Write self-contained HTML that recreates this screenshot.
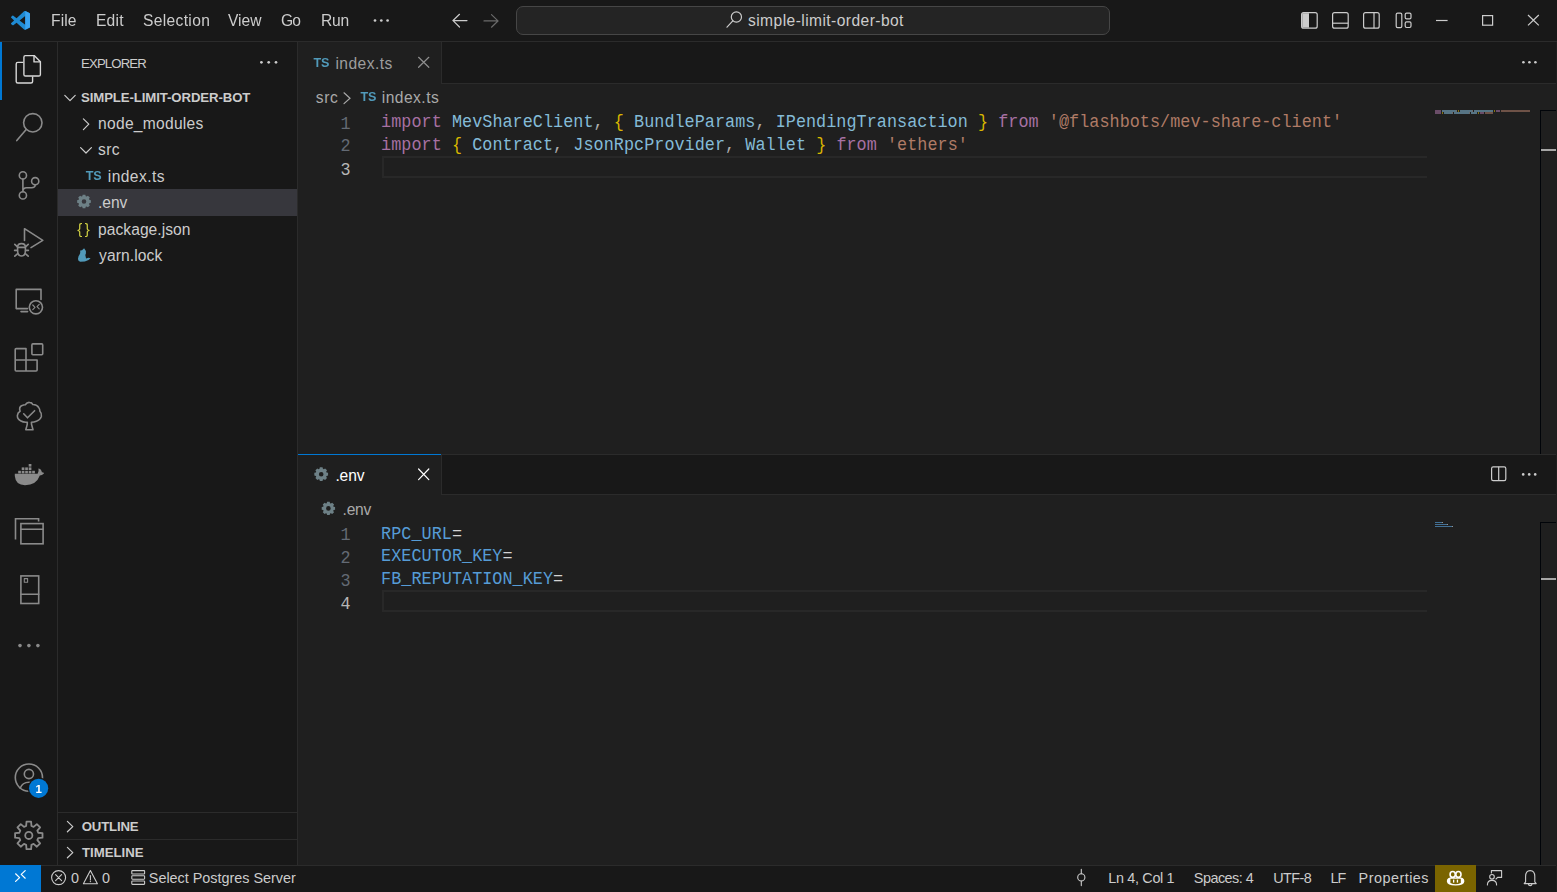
<!DOCTYPE html>
<html><head><meta charset="utf-8">
<style>
*{box-sizing:border-box;margin:0;padding:0}
html,body{width:1557px;height:892px;overflow:hidden;background:#181818}
body{position:relative;font-family:"Liberation Sans",sans-serif;color:#cccccc}
.a{position:absolute}
.t{position:absolute;white-space:pre;line-height:1;font-family:"Liberation Sans",sans-serif}
.m{position:absolute;white-space:pre;line-height:1;font-family:"Liberation Mono",monospace;font-size:16.8px;letter-spacing:0.045px;transform:scaleY(1.13);transform-origin:0 12px}
svg.ov{position:absolute;left:0;top:0;width:1557px;height:892px;overflow:visible}
.kw{color:#c586c0}.id{color:#9cdcfe}.br{color:#ffd700}.st{color:#ce9178}.pu{color:#cccccc}
.ln{color:#6e7681;text-align:right;width:40px}
</style></head><body>
<!-- title bar -->
<div class="a" style="left:0;top:41px;width:1557px;height:1px;background:#2b2b2b"></div>
<div class="a" style="left:516px;top:6px;width:594px;height:29px;border:1px solid #464646;border-radius:7px;background:#242424"></div>

<!-- activity bar -->
<div class="a" style="left:57px;top:42px;width:1px;height:823px;background:#2b2b2b"></div>
<div class="a" style="left:0;top:42px;width:2px;height:58px;background:#0078d4"></div>

<!-- sidebar -->
<div class="a" style="left:297px;top:42px;width:1px;height:823px;background:#2b2b2b"></div>
<div class="a" style="left:58px;top:189px;width:239px;height:27px;background:#37373d"></div>
<div class="a" style="left:58px;top:812px;width:239px;height:1px;background:#2b2b2b"></div>
<div class="a" style="left:58px;top:839px;width:239px;height:1px;background:#2b2b2b"></div>

<!-- editor upper -->
<div class="a" style="left:298px;top:83px;width:1259px;height:1px;background:#2b2b2b"></div>
<div class="a" style="left:298px;top:84px;width:1259px;height:370px;background:#1f1f1f"></div>
<div class="a" style="left:298px;top:42px;width:143px;height:42px;background:#1f1f1f"></div>
<div class="a" style="left:441px;top:42px;width:1px;height:42px;background:#2b2b2b"></div>
<div class="a" style="left:382px;top:156px;width:1045px;height:22px;border:2px solid #282828;border-right:0"></div>
<div class="a" style="left:1540px;top:110px;width:1px;height:344px;background:#010409"></div>
<div class="a" style="left:1540px;top:110px;width:16px;height:1px;background:#010409"></div>
<div class="a" style="left:1541px;top:149px;width:15px;height:2px;background:#a6a6a6"></div>

<!-- editor lower -->
<div class="a" style="left:298px;top:454px;width:1259px;height:1px;background:#2b2b2b"></div>
<div class="a" style="left:298px;top:494px;width:1259px;height:1px;background:#2b2b2b"></div>
<div class="a" style="left:298px;top:495px;width:1259px;height:370px;background:#1f1f1f"></div>
<div class="a" style="left:298px;top:454px;width:143px;height:41px;background:#1f1f1f"></div>
<div class="a" style="left:298px;top:454px;width:143px;height:1px;background:#0078d4"></div>
<div class="a" style="left:441px;top:454px;width:1px;height:41px;background:#2b2b2b"></div>
<div class="a" style="left:382px;top:590px;width:1045px;height:22px;border:2px solid #282828;border-right:0"></div>
<div class="a" style="left:1540px;top:522px;width:1px;height:343px;background:#010409"></div>
<div class="a" style="left:1540px;top:522px;width:16px;height:1px;background:#010409"></div>
<div class="a" style="left:1541px;top:578px;width:15px;height:2px;background:#a6a6a6"></div>

<!-- status bar -->
<div class="a" style="left:0;top:865px;width:1557px;height:1px;background:#2b2b2b"></div>
<div class="a" style="left:0;top:865px;width:41px;height:27px;background:#0078d4"></div>
<div class="a" style="left:1435px;top:865px;width:41px;height:27px;background:#7a6400"></div>
<div class="a" style="left:1556px;top:42px;width:1px;height:850px;background:#1e1e1e"></div>
<!-- code -->
<div class="m ln" style="left:310.7px;top:116.60px;color:#636a74">1</div>
<div class="m" style="left:381.1px;top:115.40px"><span style="color:#a771a3">import</span> <span style="color:#84bbd7">MevShareClient</span><span style="color:#adadad">, </span><span style="color:#d8b600">{</span> <span style="color:#84bbd7">BundleParams</span><span style="color:#adadad">, </span><span style="color:#84bbd7">IPendingTransaction</span> <span style="color:#d8b600">}</span> <span style="color:#a771a3">from</span> <span style="color:#af7b66">'@flashbots/mev-share-client'</span></div>
<div class="m ln" style="left:310.7px;top:139.40px;color:#636a74">2</div>
<div class="m" style="left:381.1px;top:138.20px"><span style="color:#a771a3">import</span> <span style="color:#d8b600">{</span> <span style="color:#84bbd7">Contract</span><span style="color:#adadad">, </span><span style="color:#84bbd7">JsonRpcProvider</span><span style="color:#adadad">, </span><span style="color:#84bbd7">Wallet</span> <span style="color:#d8b600">}</span> <span style="color:#a771a3">from</span> <span style="color:#af7b66">'ethers'</span></div>
<div class="m ln" style="left:310.7px;top:162.80px;color:#b7b7b7">3</div>
<div class="m ln" style="left:310.7px;top:528.40px;color:#636a74">1</div>
<div class="m" style="left:381.1px;top:526.60px"><span style="color:#569cd6">RPC_URL</span><span style="color:#d4d4d4">=</span></div>
<div class="m ln" style="left:310.7px;top:551.30px;color:#636a74">2</div>
<div class="m" style="left:381.1px;top:549.40px"><span style="color:#569cd6">EXECUTOR_KEY</span><span style="color:#d4d4d4">=</span></div>
<div class="m ln" style="left:310.7px;top:574.40px;color:#636a74">3</div>
<div class="m" style="left:381.1px;top:572.20px"><span style="color:#569cd6">FB_REPUTATION_KEY</span><span style="color:#d4d4d4">=</span></div>
<div class="m ln" style="left:310.7px;top:597.40px;color:#b7b7b7">4</div>
<!-- minimap -->
<div class="a" style="left:1435.00px;top:109.80px;width:5.97px;height:1.76px;background:#c586c0;opacity:0.45"></div>
<div class="a" style="left:1441.96px;top:109.80px;width:13.93px;height:1.76px;background:#9cdcfe;opacity:0.45"></div>
<div class="a" style="left:1455.89px;top:109.80px;width:0.99px;height:1.76px;background:#cccccc;opacity:0.45"></div>
<div class="a" style="left:1457.88px;top:109.80px;width:0.99px;height:1.76px;background:#ffd700;opacity:0.45"></div>
<div class="a" style="left:1459.88px;top:109.80px;width:11.94px;height:1.76px;background:#9cdcfe;opacity:0.45"></div>
<div class="a" style="left:1471.82px;top:109.80px;width:0.99px;height:1.76px;background:#cccccc;opacity:0.45"></div>
<div class="a" style="left:1473.81px;top:109.80px;width:18.91px;height:1.76px;background:#9cdcfe;opacity:0.45"></div>
<div class="a" style="left:1493.70px;top:109.80px;width:0.99px;height:1.76px;background:#ffd700;opacity:0.45"></div>
<div class="a" style="left:1495.69px;top:109.80px;width:3.98px;height:1.76px;background:#c586c0;opacity:0.45"></div>
<div class="a" style="left:1500.67px;top:109.80px;width:28.86px;height:1.76px;background:#ce9178;opacity:0.45"></div>
<div class="a" style="left:1435.00px;top:112.00px;width:5.97px;height:1.76px;background:#c586c0;opacity:0.45"></div>
<div class="a" style="left:1441.96px;top:112.00px;width:0.99px;height:1.76px;background:#ffd700;opacity:0.45"></div>
<div class="a" style="left:1443.95px;top:112.00px;width:7.96px;height:1.76px;background:#9cdcfe;opacity:0.45"></div>
<div class="a" style="left:1451.91px;top:112.00px;width:0.99px;height:1.76px;background:#cccccc;opacity:0.45"></div>
<div class="a" style="left:1453.90px;top:112.00px;width:14.93px;height:1.76px;background:#9cdcfe;opacity:0.45"></div>
<div class="a" style="left:1468.83px;top:112.00px;width:0.99px;height:1.76px;background:#cccccc;opacity:0.45"></div>
<div class="a" style="left:1470.82px;top:112.00px;width:5.97px;height:1.76px;background:#9cdcfe;opacity:0.45"></div>
<div class="a" style="left:1477.79px;top:112.00px;width:0.99px;height:1.76px;background:#ffd700;opacity:0.45"></div>
<div class="a" style="left:1479.78px;top:112.00px;width:3.98px;height:1.76px;background:#c586c0;opacity:0.45"></div>
<div class="a" style="left:1484.75px;top:112.00px;width:7.96px;height:1.76px;background:#ce9178;opacity:0.45"></div>
<div class="a" style="left:1435.00px;top:521.90px;width:6.96px;height:1.60px;background:#569cd6;opacity:0.65"></div>
<div class="a" style="left:1441.96px;top:521.90px;width:0.99px;height:1.60px;background:#d4d4d4;opacity:0.65"></div>
<div class="a" style="left:1435.00px;top:523.90px;width:11.94px;height:1.60px;background:#569cd6;opacity:0.65"></div>
<div class="a" style="left:1446.94px;top:523.90px;width:0.99px;height:1.60px;background:#d4d4d4;opacity:0.65"></div>
<div class="a" style="left:1435.00px;top:525.90px;width:16.91px;height:1.60px;background:#569cd6;opacity:0.65"></div>
<div class="a" style="left:1451.91px;top:525.90px;width:0.99px;height:1.60px;background:#d4d4d4;opacity:0.65"></div>
<!-- /minimap -->

<div class="t" style="left:51.00px;top:13.00px;font-size:15.6px;font-weight:400;color:#cccccc;letter-spacing:0.100px;will-change:transform">File</div>
<div class="t" style="left:95.60px;top:13.00px;font-size:15.6px;font-weight:400;color:#cccccc;letter-spacing:0.200px;will-change:transform">Edit</div>
<div class="t" style="left:142.60px;top:13.00px;font-size:15.6px;font-weight:400;color:#cccccc;letter-spacing:0.338px;will-change:transform">Selection</div>
<div class="t" style="left:228.40px;top:13.00px;font-size:15.6px;font-weight:400;color:#cccccc;letter-spacing:-0.000px;will-change:transform">View</div>
<div class="t" style="left:281.30px;top:13.00px;font-size:15.6px;font-weight:400;color:#cccccc;letter-spacing:-1.000px;will-change:transform">Go</div>
<div class="t" style="left:320.60px;top:13.00px;font-size:15.6px;font-weight:400;color:#cccccc;letter-spacing:-0.200px;will-change:transform">Run</div>
<div class="t" style="left:748.00px;top:13.00px;font-size:15.6px;font-weight:400;color:#cccccc;letter-spacing:0.429px;">simple-limit-order-bot</div>
<div class="t" style="left:81.00px;top:57.20px;font-size:13.2px;font-weight:400;color:#cccccc;letter-spacing:-0.857px;">EXPLORER</div>
<div class="t" style="left:81.00px;top:91.20px;font-size:13.2px;font-weight:700;color:#cccccc;letter-spacing:-0.095px;">SIMPLE-LIMIT-ORDER-BOT</div>
<div class="t" style="left:98.10px;top:115.90px;font-size:15.6px;font-weight:400;color:#cccccc;letter-spacing:0.264px;">node_modules</div>
<div class="t" style="left:98.10px;top:142.30px;font-size:15.6px;font-weight:400;color:#cccccc;letter-spacing:0.350px;">src</div>
<div class="t" style="left:107.80px;top:168.70px;font-size:15.6px;font-weight:400;color:#cccccc;letter-spacing:0.414px;">index.ts</div>
<div class="t" style="left:98.10px;top:195.10px;font-size:15.6px;font-weight:400;color:#cccccc;letter-spacing:-0.100px;">.env</div>
<div class="t" style="left:98.10px;top:221.50px;font-size:15.6px;font-weight:400;color:#cccccc;letter-spacing:0.036px;">package.json</div>
<div class="t" style="left:99.10px;top:247.90px;font-size:15.6px;font-weight:400;color:#cccccc;letter-spacing:0.100px;">yarn.lock</div>
<div class="t" style="left:81.80px;top:820.00px;font-size:13.2px;font-weight:700;color:#cccccc;letter-spacing:-0.183px;">OUTLINE</div>
<div class="t" style="left:82.00px;top:846.00px;font-size:13.2px;font-weight:700;color:#cccccc;letter-spacing:-0.014px;">TIMELINE</div>
<div class="t" style="left:335.40px;top:56.00px;font-size:15.6px;font-weight:400;color:#9d9d9d;letter-spacing:0.443px;">index.ts</div>
<div class="t" style="left:335.40px;top:468.00px;font-size:15.6px;font-weight:400;color:#ffffff;letter-spacing:-0.133px;">.env</div>
<div class="t" style="left:315.70px;top:90.00px;font-size:15.6px;font-weight:400;color:#a9a9a9;letter-spacing:0.650px;">src</div>
<div class="t" style="left:381.80px;top:90.00px;font-size:15.6px;font-weight:400;color:#a9a9a9;letter-spacing:0.457px;">index.ts</div>
<div class="t" style="left:342.50px;top:501.90px;font-size:15.6px;font-weight:400;color:#a9a9a9;letter-spacing:-0.200px;">.env</div>
<div class="t" style="left:71.00px;top:870.70px;font-size:14.4px;font-weight:400;color:#cccccc;letter-spacing:0.000px;">0</div>
<div class="t" style="left:102.00px;top:870.70px;font-size:14.4px;font-weight:400;color:#cccccc;letter-spacing:0.000px;">0</div>
<div class="t" style="left:148.80px;top:870.70px;font-size:14.4px;font-weight:400;color:#cccccc;letter-spacing:-0.010px;">Select Postgres Server</div>
<div class="t" style="left:1108.30px;top:871.00px;font-size:14.4px;font-weight:400;color:#cccccc;letter-spacing:-0.330px;">Ln 4, Col 1</div>
<div class="t" style="left:1193.80px;top:871.00px;font-size:14.4px;font-weight:400;color:#cccccc;letter-spacing:-0.500px;">Spaces: 4</div>
<div class="t" style="left:1273.30px;top:871.00px;font-size:14.4px;font-weight:400;color:#cccccc;letter-spacing:-0.575px;">UTF-8</div>
<div class="t" style="left:1330.50px;top:871.00px;font-size:14.4px;font-weight:400;color:#cccccc;letter-spacing:-1.000px;">LF</div>
<div class="t" style="left:1358.60px;top:871.00px;font-size:14.4px;font-weight:400;color:#cccccc;letter-spacing:0.478px;">Properties</div>
<svg class="ov">
<g transform="translate(11,10.9) scale(0.19)">
<path fill="#1f8ad2" d="M96.46 10.8 75.86.88a6.23 6.23 0 0 0-7.1 1.21L29.35 38.04 12.18 25.01a4.16 4.16 0 0 0-5.32.24l-5.5 5a4.17 4.17 0 0 0 0 6.16L16.25 50 1.36 63.58a4.17 4.17 0 0 0 0 6.16l5.5 5a4.16 4.16 0 0 0 5.320.24l17.17-13.03 39.41 35.95a6.22 6.22 0 0 0 7.1 1.210l20.6-9.92A6.25 6.25 0 0 0 100 83.56V16.42a6.25 6.25 0 0 0-3.54-5.62ZM75.02 72.7 45.11 50l29.91-22.7Z"/>
<path fill="#3aa3f0" d="M75.02 0.5 96.46 10.8A6.25 6.25 0 0 1 100 16.42V83.56a6.25 6.25 0 0 1-3.54 5.63L75.02 99.5Z"/>
</g>
<g fill="#cccccc"><circle cx="375.00" cy="20.5" r="1.35"/><circle cx="381.30" cy="20.5" r="1.35"/><circle cx="387.60" cy="20.5" r="1.35"/></g>
<g fill="none" stroke-width="1.2" stroke-linecap="round">
<path stroke="#cccccc" d="M453 20.6H467M459.5 14.3L453 20.6L459.5 27"/>
<path stroke="#6b6b6b" d="M484 20.9H498M491.5 14.6L498 20.9L491.5 27.2"/>
</g>
<g fill="none" stroke="#cccccc" stroke-width="1.2"><circle cx="736.4" cy="17" r="5.1"/><path d="M732.8 20.8L727 27.2" stroke-linecap="round"/></g>
<g fill="none" stroke="#cccccc" stroke-width="1.2">
<rect x="1301.6" y="12.6" width="15.6" height="15.6" rx="2"/>
<rect x="1332.6" y="12.6" width="15.6" height="15.6" rx="2"/><path d="M1332.6 23.2H1348.2"/>
<rect x="1363.6" y="12.6" width="15.6" height="15.6" rx="2"/><path d="M1374 12.6V28.2"/>
<rect x="1396.2" y="13.2" width="5.6" height="14.4" rx="1.4"/>
<rect x="1405.2" y="13.2" width="5.8" height="5.6" rx="1.4"/>
<rect x="1405.2" y="21.9" width="5.8" height="5.6" rx="1.4"/>
<path d="M1436 20.5H1447.6"/>
<rect x="1482.6" y="15.6" width="10" height="9.6"/>
<path d="M1528 15L1538.8 25.4M1538.8 15L1528 25.4"/>
</g>
<path fill="#cccccc" d="M1302.2 13.2h6.8v14.4h-6.8z"/>

<g fill="none" stroke="#d7d7d7" stroke-width="1.4" stroke-linejoin="round">
<path d="M23.3 62.4H17.8Q16.2 62.4 16.2 64V81.5Q16.2 83 17.8 83H31Q32.6 83 32.6 81.5V76.5"/>
<path d="M25.4 55.6H34.2L40.4 61.8V74.4Q40.4 76 38.8 76H25.4Q23.9 76 23.9 74.4V57.2Q23.9 55.6 25.4 55.6Z"/>
<path d="M34 55.6V61.9H40.4"/>
</g>
<g fill="none" stroke="#8a8a8a" stroke-width="1.6" stroke-linecap="round" stroke-linejoin="round">
<circle cx="32.8" cy="122.8" r="9.2"/><path d="M26.2 129.4L16.8 140.6"/>
<circle cx="22.9" cy="175.4" r="3.6"/><circle cx="22.9" cy="195.4" r="3.6"/><circle cx="35.2" cy="181.2" r="3.6"/>
<path d="M22.9 179V191.8M35.2 184.8Q35.2 187.8 31.5 187.8H26.6Q22.9 187.8 22.9 191.5"/>
<path d="M24.5 240.5V228.7L42.8 240.4L31 247.6"/>
<path d="M17.6 247.2Q17.6 243.6 21.5 243.6Q25.4 243.6 25.4 247.2V250.8Q25.4 256 21.5 256Q17.6 256 17.6 250.8Z"/>
<path d="M17.6 247.4H25.4M14.8 244.4L17.2 246.6M28.2 244.4L25.8 246.6M14.6 250.4H17.4M25.6 250.4H28.4M14.8 256.2L17.4 253.8M28.2 256.2L25.6 253.8"/>
<path d="M27.5 308.6H16.2V289.4H41V299.5"/><path d="M21 311.6H27.6"/>
<circle cx="35.9" cy="307.3" r="6.6"/>
<path d="M32.8 305L35 307.3L32.8 309.6M39.2 304.3L37 306.6L39.2 308.9" stroke-width="1.2"/>
<path d="M15.2 349.6Q15.2 348.6 16.2 348.6H26V371H16.2Q15.2 371 15.2 370ZM15.2 360H37.1V370Q37.1 371 36.1 371H26"/>
<rect x="31.9" y="343.9" width="10.8" height="10.8" rx="1"/>
<path d="M27.3 422.2Q23.5 422.6 21 421Q17 419 17.4 415.4Q17.6 412.6 20.1 411.3Q18.6 407 22 405.6Q23.6 404.6 25.3 404.7Q27 402.2 29.5 402.4Q32 402.4 32.8 404.5Q37 404.4 38.8 407.6Q40 409.4 39.9 411.3Q42 413.4 41.4 416.4Q40.4 420 36.4 421.2Q34 422.2 31.4 422.2L31.6 424.6L33 429.8H25.8L27.2 424.6Z"/>
<path d="M23.7 413.8L27.5 417.8L34.6 410.7"/>
<path d="M15.5 539.6V518.8H38.6V521.6" stroke-linecap="butt" stroke-linejoin="miter"/>
<rect x="20.9" y="523.6" width="22.2" height="20.2" stroke-linejoin="miter"/>
<path d="M20.9 529.2H43.1"/>
<rect x="20.9" y="575.9" width="17.8" height="27.6" stroke-linejoin="miter"/>
<path d="M20.9 594.2H38.7"/>
<rect x="24.3" y="578.6" width="3.3" height="3.6" stroke-width="1.1"/>
<circle cx="28.9" cy="777.6" r="13.6"/>
<circle cx="28.9" cy="774" r="4.6"/>
<path d="M20.2 788.2Q22.4 782.2 28.9 782.2Q32.6 782.2 34.6 784"/>
</g>
<g fill="#8a8a8a">
<path d="M14.8 473.8H37.6Q39.2 471 38.4 468.4L40.2 469Q41.8 470.8 42 472.4Q43.6 472.2 44 473.4Q42 475.4 39.8 475.6Q36.5 485.2 25 485.2Q15.6 485.2 14.8 476Z"/>
<rect x="18.2" y="470.8" width="2.7" height="2.6"/><rect x="21.7" y="470.8" width="2.7" height="2.6"/><rect x="25.2" y="470.8" width="2.7" height="2.6"/><rect x="28.7" y="470.8" width="2.7" height="2.6"/><rect x="32.2" y="470.8" width="2.7" height="2.6"/>
<rect x="21.7" y="467.4" width="2.7" height="2.6"/><rect x="25.2" y="467.4" width="2.7" height="2.6"/><rect x="28.7" y="467.4" width="2.7" height="2.6"/>
<rect x="28.7" y="464" width="2.7" height="2.6"/>
<circle cx="20" cy="645.6" r="1.8"/><circle cx="28.9" cy="645.6" r="1.8"/><circle cx="37.9" cy="645.6" r="1.8"/>
</g>
<circle cx="38.6" cy="788.3" r="10.8" fill="#181818"/>
<circle cx="38.6" cy="788.3" r="9.6" fill="#0078d4"/>
<text x="38.8" y="792.6" fill="#ffffff" font-family="Liberation Sans" font-weight="bold" font-size="11.5" text-anchor="middle">1</text>

<g fill="none" stroke="#8a8a8a" stroke-width="1.8" stroke-linejoin="round"><path d="M26.16 825.96 L26.48 821.70 L31.12 821.70 L31.44 825.96 L33.60 826.86 L36.85 824.07 L40.13 827.35 L37.34 830.60 L38.24 832.76 L42.50 833.08 L42.50 837.72 L38.24 838.04 L37.34 840.20 L40.13 843.45 L36.85 846.73 L33.60 843.94 L31.44 844.84 L31.12 849.10 L26.48 849.10 L26.16 844.84 L24.00 843.94 L20.75 846.73 L17.47 843.45 L20.26 840.20 L19.36 838.04 L15.10 837.72 L15.10 833.08 L19.36 832.76 L20.26 830.60 L17.47 827.35 L20.75 824.07 L24.00 826.86Z"/><circle cx="28.8" cy="835.4" r="3.6"/></g>
<g fill="#cccccc"><circle cx="261.40" cy="62.3" r="1.35"/><circle cx="268.70" cy="62.3" r="1.35"/><circle cx="276.00" cy="62.3" r="1.35"/></g>
<g fill="none" stroke="#cccccc" stroke-width="1.2" stroke-linecap="round" stroke-linejoin="round">
<path d="M64.8 95.4L70 100.6L75.2 95.4"/>
<path d="M83.4 118.8L88.8 124.2L83.4 129.6"/>
<path d="M80.6 147.6L86 153L91.4 147.6"/>
<path d="M67.4 821.4L72.8 826.6L67.4 831.8"/>
<path d="M67.4 847.4L72.8 852.6L67.4 857.8"/>
</g>
<path fill="#6d8086" fill-rule="evenodd" d="M82.28 196.17 L82.66 194.63 L85.34 194.63 L85.72 196.17 L86.55 196.52 L87.91 195.70 L89.80 197.59 L88.98 198.95 L89.33 199.78 L90.87 200.16 L90.87 202.84 L89.33 203.22 L88.98 204.05 L89.80 205.41 L87.91 207.30 L86.55 206.48 L85.72 206.83 L85.34 208.37 L82.66 208.37 L82.28 206.83 L81.45 206.48 L80.09 207.30 L78.20 205.41 L79.02 204.05 L78.67 203.22 L77.13 202.84 L77.13 200.16 L78.67 199.78 L79.02 198.95 L78.20 197.59 L80.09 195.70 L81.45 196.52Z M86.30 201.50A2.3 2.3 0 1 0 81.70 201.50A2.3 2.3 0 1 0 86.30 201.50Z"/>
<path fill="#6d8086" fill-rule="evenodd" d="M319.48 468.87 L319.86 467.33 L322.54 467.33 L322.92 468.87 L323.75 469.22 L325.11 468.40 L327.00 470.29 L326.18 471.65 L326.53 472.48 L328.07 472.86 L328.07 475.54 L326.53 475.92 L326.18 476.75 L327.00 478.11 L325.11 480.00 L323.75 479.18 L322.92 479.53 L322.54 481.07 L319.86 481.07 L319.48 479.53 L318.65 479.18 L317.29 480.00 L315.40 478.11 L316.22 476.75 L315.87 475.92 L314.33 475.54 L314.33 472.86 L315.87 472.48 L316.22 471.65 L315.40 470.29 L317.29 468.40 L318.65 469.22Z M323.50 474.20A2.3 2.3 0 1 0 318.90 474.20A2.3 2.3 0 1 0 323.50 474.20Z"/>
<path fill="#6d8086" fill-rule="evenodd" d="M326.73 503.22 L327.10 501.72 L329.70 501.72 L330.07 503.22 L330.88 503.56 L332.20 502.76 L334.04 504.60 L333.24 505.92 L333.58 506.73 L335.08 507.10 L335.08 509.70 L333.58 510.07 L333.24 510.88 L334.04 512.20 L332.20 514.04 L330.88 513.24 L330.07 513.58 L329.70 515.08 L327.10 515.08 L326.73 513.58 L325.92 513.24 L324.60 514.04 L322.76 512.20 L323.56 510.88 L323.22 510.07 L321.72 509.70 L321.72 507.10 L323.22 506.73 L323.56 505.92 L322.76 504.60 L324.60 502.76 L325.92 503.56Z M330.70 508.40A2.3 2.3 0 1 0 326.10 508.40A2.3 2.3 0 1 0 330.70 508.40Z"/>
<text x="85.8" y="179.6" fill="#519aba" font-family="Liberation Sans" font-weight="bold" font-size="12.6" letter-spacing="-0.3">TS</text>
<text x="313.6" y="66.9" fill="#519aba" font-family="Liberation Sans" font-weight="bold" font-size="12.6" letter-spacing="-0.3">TS</text>
<text x="360.6" y="100.8" fill="#519aba" font-family="Liberation Sans" font-weight="bold" font-size="12.6" letter-spacing="-0.3">TS</text>
<text x="77.2" y="234.2" fill="#cbcb41" font-family="Liberation Sans" font-size="15" letter-spacing="2.6">{}</text>
<path fill="#519aba" d="M84.1 248.2L85.9 251L85.9 253.4L85.3 255L86.1 258.4L88.4 257.8L90.6 258.2Q88.6 260.8 84.8 261.6L80.2 261.7Q77.9 261.2 78 258.8Q78.3 256.2 79.6 254.6L80.2 253L80.2 250.6L82 250.2Z"/>
<g fill="none" stroke-width="1.2" stroke-linecap="round">
<path stroke="#8f8f8f" d="M418.6 57.3L428.8 67.3M428.8 57.3L418.6 67.3"/>
<path stroke="#ffffff" d="M418.6 469L428.8 479.6M428.8 469L418.6 479.6"/>
<path stroke="#a9a9a9" d="M344 92.8L350 98.2L344 103.6"/>
</g>
<g fill="#cccccc"><circle cx="1523.40" cy="62.3" r="1.3"/><circle cx="1529.40" cy="62.3" r="1.3"/><circle cx="1535.40" cy="62.3" r="1.3"/></g>
<g fill="#cccccc"><circle cx="1523.20" cy="474.4" r="1.3"/><circle cx="1529.20" cy="474.4" r="1.3"/><circle cx="1535.20" cy="474.4" r="1.3"/></g>
<g fill="none" stroke="#cccccc" stroke-width="1.2"><rect x="1491.6" y="466.8" width="14.2" height="13.8" rx="1.6"/><path d="M1498.7 466.8V480.6"/></g>
<g fill="none" stroke="#ffffff" stroke-width="1.2" stroke-linecap="round" stroke-linejoin="round">
<path d="M15.6 873.8L19.6 877.6L15.6 881.4M25.2 870.6L21.2 874.4L25.2 878.2"/>
</g>
<g fill="none" stroke="#cccccc" stroke-width="1.1" stroke-linecap="round" stroke-linejoin="round">
<circle cx="58.6" cy="877.6" r="7"/><path d="M55.6 874.6L61.6 880.6M61.6 874.6L55.6 880.6"/>
<path d="M90.4 870.6L97.4 883.8H83.4Z"/><path d="M90.4 875.6V880"/>
<rect x="131.8" y="870.6" width="12.8" height="3.4" rx="0.6"/><rect x="131.8" y="875.8" width="12.8" height="3.4" rx="0.6"/><rect x="131.8" y="881" width="12.8" height="3.4" rx="0.6"/>
<circle cx="1081.3" cy="877.4" r="3.6"/><path d="M1081.3 869.2V873.8M1081.3 881V885.6"/>
<path d="M1496.6 885Q1496.6 880.4 1492 880.4Q1487.4 880.4 1487.4 885"/><circle cx="1492" cy="876.8" r="2.3"/>
<path d="M1491.4 873V870.6H1501.6V877.4H1497.6L1496 879"/>
<path d="M1530.2 870.6Q1534.8 870.6 1534.8 876.6V881.8L1536.2 883.6H1524.2L1525.6 881.8V876.6Q1525.6 870.6 1530.2 870.6ZM1528.4 884.2Q1528.6 885.6 1530.2 885.6Q1531.8 885.6 1532 884.2"/>
</g>
<circle cx="90.4" cy="881.6" r="0.7" fill="#cccccc"/>
<g fill="none" stroke="#ffffff" stroke-width="1.6"><ellipse cx="1452.7" cy="874.4" rx="2.6" ry="2.9"/><ellipse cx="1458.4" cy="874.4" rx="2.6" ry="2.9"/></g>
<g fill="#ffffff"><path fill-rule="evenodd" d="M1448.6 878Q1446.8 879 1446.8 881.2Q1447.2 885.6 1455.6 885.6Q1464 885.6 1464.4 881.2Q1464.4 879 1462.6 878L1461 877.4H1450.2Z M1450.4 878.8H1460.8V883Q1458.2 884.2 1455.6 884.2Q1453 884.2 1450.4 883Z"/>
<rect x="1453" y="879.6" width="1.3" height="3"/><rect x="1456.8" y="879.6" width="1.3" height="3"/></g>

</svg>
</body></html>
